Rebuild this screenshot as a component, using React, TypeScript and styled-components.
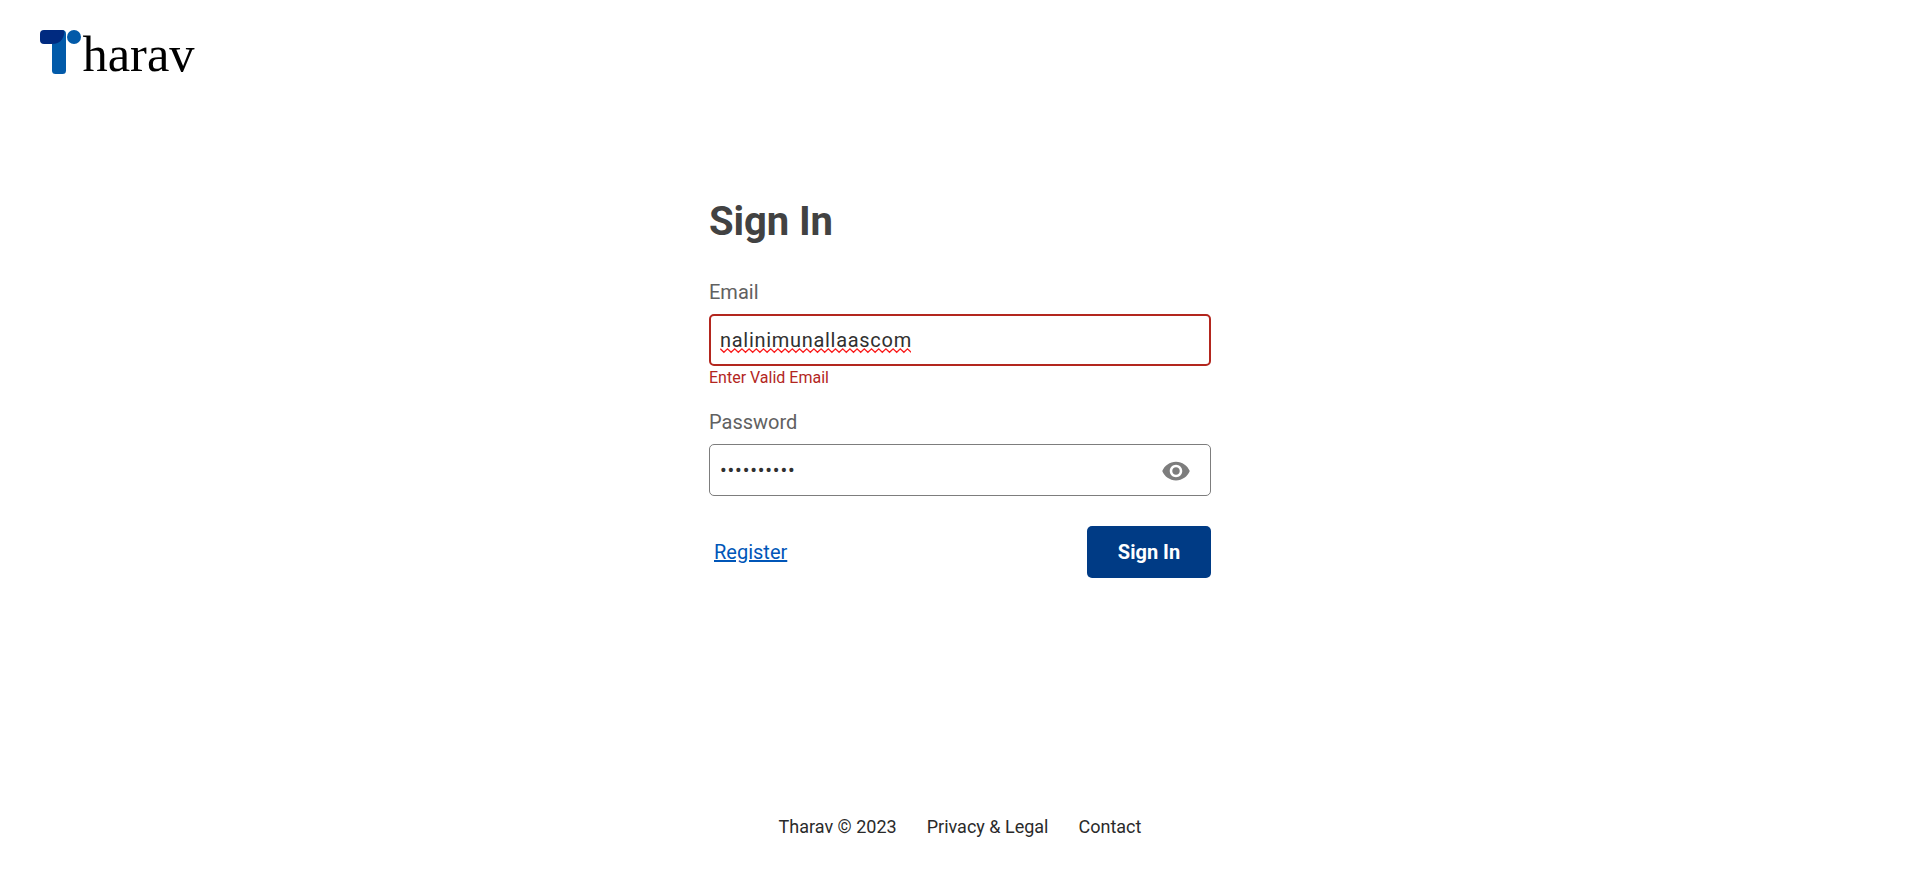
import React from "react";
import styled, { createGlobalStyle } from "styled-components";

const GlobalStyle = createGlobalStyle`
  * { box-sizing: border-box; }
  body { margin: 0; background: #fff; font-family: Roboto, sans-serif; }
`;

const Page = styled.div`
  min-height: 869px;
  display: flex;
  flex-direction: column;
`;

const Header = styled.header`
  height: 195px;
  padding: 30px 0 0 40px;
`;

const Logo = styled.svg`
  display: block;
  overflow: visible;
`;

const Form = styled.form`
  width: 502px;
  margin: 0 auto;
  flex: 1;
`;

const Title = styled.h1`
  margin: 0 0 31px;
  color: #424242;
  font-size: 40px;
  line-height: 54px;
  font-weight: 700;
  letter-spacing: -0.1px;
`;

const Field = styled.div`
  display: flex;
  flex-direction: column;
`;

const Label = styled.label`
  color: #616161;
  font-size: 20px;
  line-height: 24px;
  margin-bottom: 10px;
`;

const InputBox = styled.div<{ $invalid?: boolean }>`
  position: relative;
  display: flex;
  align-items: center;
  height: 52px;
  padding: 0 ${(p) => (p.$invalid ? 18 : 19)}px 0 ${(p) => (p.$invalid ? 9 : 10)}px;
  border: ${(p) => (p.$invalid ? "2px solid #b3261e" : "1px solid #7d7d7d")};
  border-radius: 5px;
`;

const Input = styled.input`
  flex: 1;
  min-width: 0;
  padding: 0;
  border: 0;
  outline: 0;
  background: transparent;
  color: #303030;
  font: 400 20px/24px Roboto, sans-serif;
  letter-spacing: 0.7px;

  &[type="password"] {
    letter-spacing: 0.8px;
  }
`;

const Squiggle = styled.svg`
  position: absolute;
  left: 9px;
  top: 31px;
`;

const ErrorText = styled.div`
  height: 44px;
  padding-top: 2px;
  color: #b3261e;
  font-size: 16px;
  line-height: 20px;
`;

const Eye = styled.svg`
  fill: #7d7d7d;
  margin-top: 2px;
`;

const Actions = styled.div`
  display: flex;
  justify-content: space-between;
  align-items: center;
  margin-top: 30px;
  padding-left: 5px;
`;

const Register = styled.a`
  color: #0056b8;
  font-size: 20px;
  text-decoration: underline;
  text-decoration-thickness: 2px;
`;

const Submit = styled.button`
  width: 124px;
  height: 52px;
  padding: 0;
  border: 0;
  border-radius: 5px;
  background: #003b85;
  color: #fff;
  font: 700 20px Roboto, sans-serif;
`;

const Footer = styled.footer`
  display: flex;
  justify-content: center;
  gap: 30px;
  height: 54px;
  color: #2a2a2a;
  font-size: 18px;
  line-height: 24px;
`;

const zigzag = Array.from({ length: 54 }, (_, i) => `${i * 3.6 + 0.3},${i % 2 ? 5.3 : 1.8}`).join(" ");

export default function App() {
  return (
    <Page>
      <GlobalStyle />
      <Header>
        <Logo width="170" height="64" viewBox="0 0 170 64">
          <path d="M12 14L22 0Q26 0 26 4V40.500Q26 44 22.500 44H15.500Q12 44 12 40.500Z" fill="#025aa9" />
          <path d="M4 0H22Q24.500 0 24.500 2Q23 14 12 14H4Q0 14 0 10V4Q0 0 4 0Z" fill="#002a80" />
          <circle cx="34" cy="7" r="7" fill="#025aa9" />
          <text x="42.500" y="41" fill="#000" fontFamily="Liberation Serif, serif" fontSize="50" textLength="112" lengthAdjust="spacingAndGlyphs">
            harav
          </text>
        </Logo>
      </Header>
      <Form onSubmit={(e) => e.preventDefault()}>
        <Title>Sign In</Title>
        <Field>
          <Label htmlFor="email">Email</Label>
          <InputBox $invalid>
            <Input id="email" defaultValue="nalinimunallaascom" spellCheck={false} />
            <Squiggle width="191" height="8" fill="none" stroke="#fa1c1c" strokeWidth="1.3">
              <polyline points={zigzag} />
            </Squiggle>
          </InputBox>
          <ErrorText>Enter Valid Email</ErrorText>
        </Field>
        <Field>
          <Label htmlFor="password">Password</Label>
          <InputBox>
            <Input id="password" type="password" defaultValue="abcdefghij" />
            <Eye width="30" height="30" viewBox="0 0 24 24">
              <path d="M12 4.500C7 4.500 2.730 7.610 1 12c1.730 4.390 6 7.500 11 7.500s9.270-3.110 11-7.500c-1.730-4.390-6-7.500-11-7.500zM12 17c-2.760 0-5-2.240-5-5s2.240-5 5-5 5 2.240 5 5-2.240 5-5 5zm0-8c-1.660 0-3 1.340-3 3s1.340 3 3 3 3-1.340 3-3-1.340-3-3-3z" />
            </Eye>
          </InputBox>
        </Field>
        <Actions>
          <Register href="#">Register</Register>
          <Submit type="submit">Sign In</Submit>
        </Actions>
      </Form>
      <Footer>
        <span>Tharav © 2023</span>
        <span>Privacy &amp; Legal</span>
        <span>Contact</span>
      </Footer>
    </Page>
  );
}
